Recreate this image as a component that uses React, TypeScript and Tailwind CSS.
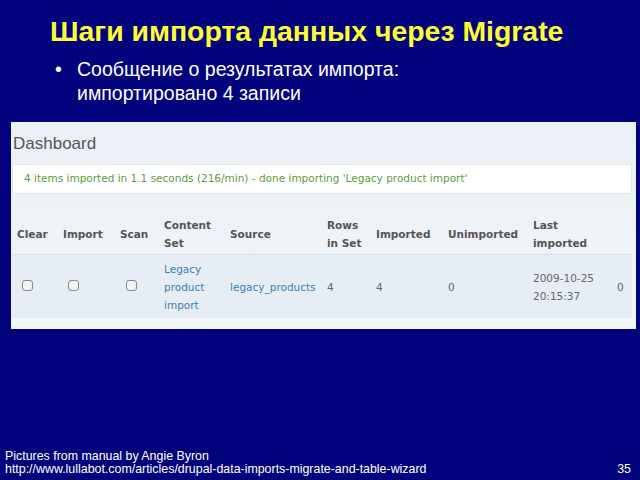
const cols = [
  { label: ["Clear"], w: "w-[46px]" },
  { label: ["Import"], w: "w-[57px]" },
  { label: ["Scan"], w: "w-[44px]" },
  { label: ["Content", "Set"], w: "w-[66px]" },
  { label: ["Source"], w: "w-[97px]" },
  { label: ["Rows", "in Set"], w: "w-[49px]" },
  { label: ["Imported"], w: "w-[72px]" },
  { label: ["Unimported"], w: "w-[85px]" },
  { label: ["Last", "imported"], w: "w-[87px]" },
  { label: [""], w: "w-[18px]" },
];

function Box() {
  return <span className="inline-block h-[11px] w-[11px] rounded-[3px] border border-[#8a8a8a] bg-[#f4f4f4]" />;
}

export default function App() {
  return (
    <div className="flex h-[480px] w-[640px] flex-col bg-[#02037c] font-['Liberation_Sans',Arial,sans-serif]">
      <h1 className="pl-[50px] pt-[13px] text-[28.4px] font-bold leading-[36px] text-[#ffff33]">
        Шаги импорта данных через Migrate
      </h1>

      <div className="mt-[8px] flex pl-[55px] text-[19.5px] leading-[24px] text-white">
        <span className="w-[22px]">•</span>
        <p>
          Сообщение о результатах импорта:
          <br />
          импортировано 4 записи
        </p>
      </div>

      <div className="ml-[11px] mr-[4px] mt-[17px] h-[207px] bg-gradient-to-b from-[#eaf0f6] to-[#f3f6f9] pr-[4px] pl-[1px] pt-[12px] font-['DejaVu_Sans',Verdana,sans-serif]">
        <div className="pl-[1px] font-['Liberation_Sans',Arial,sans-serif] text-[17px] leading-[20px] text-[#555]">
          Dashboard
        </div>
        <div className="mt-[10px] flex h-[30px] items-center border border-[#e2e8dc] bg-white pl-[11px] text-[10.5px] text-[#5a9e3c]">
          4 items imported in 1.1 seconds (216/min) - done importing 'Legacy product import'
        </div>

        <div className="mt-[20px] flex h-[41px] items-center border-b border-[#d6dee8] text-[10.5px] font-bold leading-[18px] text-[#555]">
          {cols.map((c, i) => (
            <div key={i} className={`${c.w} shrink-0 pl-[5px]`}>
              {c.label.map((l, j) => (
                <div key={j}>{l}</div>
              ))}
            </div>
          ))}
        </div>

        <div className="flex h-[63px] items-center bg-[#e6edf5] text-[10.5px] leading-[18px] text-[#666]">
          <div className="w-[46px] shrink-0 pl-[10px]"><Box /></div>
          <div className="w-[57px] shrink-0 pl-[10px]"><Box /></div>
          <div className="w-[44px] shrink-0 pl-[11px]"><Box /></div>
          <div className="w-[66px] shrink-0 pl-[5px] text-[#3b7ec0]">
            <div>Legacy</div>
            <div>product</div>
            <div>import</div>
          </div>
          <div className="w-[97px] shrink-0 pl-[5px] text-[#3b7ec0]">legacy_products</div>
          <div className="w-[49px] shrink-0 pl-[5px]">4</div>
          <div className="w-[72px] shrink-0 pl-[5px]">4</div>
          <div className="w-[85px] shrink-0 pl-[5px]">0</div>
          <div className="w-[87px] shrink-0 pl-[5px]">
            <div>2009-10-25</div>
            <div>20:15:37</div>
          </div>
          <div className="w-[18px] shrink-0 pl-[2px]">0</div>
        </div>
      </div>

      <div className="mt-auto flex items-end justify-between pb-[4px] pl-[5px] pr-[9px] text-[12.4px] leading-[13px] text-white">
        <div>
          <div>Pictures from manual by Angie Byron</div>
          <div>http://www.lullabot.com/articles/drupal-data-imports-migrate-and-table-wizard</div>
        </div>
        <div>35</div>
      </div>
    </div>
  );
}
